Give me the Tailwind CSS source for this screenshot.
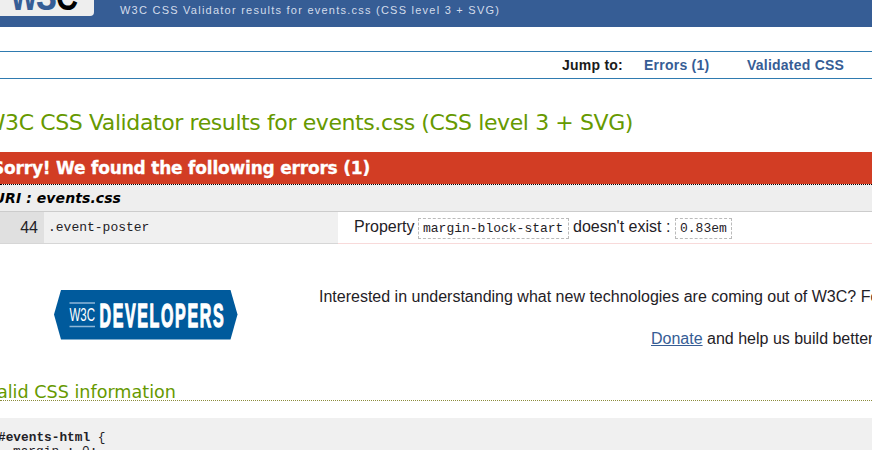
<!DOCTYPE html>
<html lang="en">
<head>
<meta charset="utf-8">
<title>W3C CSS Validator results</title>
<script src="https://cdn.jsdelivr.net/npm/@tailwindcss/browser@4"></script>
</head>
<body class="w-[872px] h-[450px] overflow-hidden bg-white text-[#1f2126] font-['Liberation_Sans',Arial,sans-serif]">
<header class="h-[27px] bg-[#365d95] flex">
  <svg class="w-[94px] h-4 shrink-0 rounded-br-[4px] bg-[#eeeeee]" viewBox="0 0 94 16" font-family="Liberation Sans, sans-serif" font-weight="bold">
    <text x="10.500" y="9.500" font-size="38" fill="#365d95" textLength="27" lengthAdjust="spacingAndGlyphs">W</text>
    <text x="36" y="9.500" font-size="38" fill="#365d95" textLength="21" lengthAdjust="spacingAndGlyphs">3</text>
    <text x="56" y="9.500" font-size="38" fill="#000" textLength="22" lengthAdjust="spacingAndGlyphs">C</text>
  </svg>
  <p class="ml-[26px] mt-[3px] text-[11px] leading-[15px] tracking-[1.24px] text-[#d3dceb] whitespace-nowrap">W3C CSS Validator results for events.css (CSS level 3 + SVG)</p>
</header>
<nav class="mt-6 h-7 border-y border-[#2f7bb0] flex items-center font-bold text-[14px] leading-[26px] tracking-[0.23px] whitespace-nowrap">
  <span class="ml-[562px] w-[82px] text-[#1b1b1b]">Jump to:</span>
  <a class="w-[103px] text-[#365d95]">Errors (1)</a>
  <a class="text-[#365d95]">Validated CSS</a>
</nav>
<h2 class="mt-[27px] w-[633px] flex justify-end whitespace-nowrap font-['DejaVu_Sans',sans-serif] text-[22px] leading-[34px] tracking-[-0.4px] text-[#690]">W3C CSS Validator results for events.css (CSS level 3 + SVG)</h2>
<h3 class="mt-[12px] h-8 bg-[#d23d24]"><span class="w-[370px] h-8 flex justify-end whitespace-nowrap font-['DejaVu_Sans',sans-serif] font-bold text-[17px] leading-[32px] tracking-[-0.2px] text-white [-webkit-text-stroke:0.3px_white]">Sorry! We found the following errors (1)</span></h3>
<h4 class="h-7 border-t border-dotted border-black border-b border-b-[#ccc] bg-[#eee] [border-bottom-style:solid]"><span class="w-[121px] flex justify-end whitespace-nowrap font-['DejaVu_Sans',sans-serif] font-bold italic text-[14px] leading-[26px] tracking-[0.08px] text-black">URI : events.css</span></h4>
<div class="h-8 flex whitespace-nowrap">
  <div class="w-11 bg-[#e0e0e0] border-b border-[#d6d6d6] pr-[6px] text-right text-[16px] leading-[31px]">44</div>
  <div class="w-[294px] bg-[#f0f0f0] border-b border-[#d6d6d6] pl-1 font-['Liberation_Mono',monospace] text-[13px] leading-[32px]">.event-poster</div>
  <div class="flex-1 border-b border-[#f8dada] pl-4 flex text-[16px] leading-[30px]">
    <span class="w-[64px]">Property</span>
    <code class="mt-[6px] w-[151px] h-[21px] border border-dashed border-[#bbb] pl-1 font-['Liberation_Mono',monospace] text-[13px] leading-[20px]">margin-block-start</code>
    <span class="w-[102px] ml-1">doesn't exist :</span>
    <code class="mt-[6px] w-[57px] h-[21px] border border-dashed border-[#bbb] pl-1 font-['Liberation_Mono',monospace] text-[13px] leading-[20px]">0.83em</code>
  </div>
</div>
<section class="h-[136px] flex pt-[42px] whitespace-nowrap text-[16px]">
  <svg class="w-[184px] h-[58px] ml-[54px] shrink-0" viewBox="0 0 184 58" fill="none">
    <path d="M7 4H176.5L183.5 28.5L176.5 53.500H7L0 28.500Z" fill="#005a9c"/>
    <path d="M15.500 17H41M15.500 40.500H41" stroke="#8eb7d7" stroke-width="1.3"/>
    <g fill="#fff" font-family="Liberation Sans, sans-serif">
      <text x="15.500" y="35" font-size="18" textLength="25.500" lengthAdjust="spacingAndGlyphs">W3C</text>
      <g font-size="34" font-weight="bold" transform="translate(45.500 40.500) scale(.47 1)">
        <text textLength="264" lengthAdjust="spacing" stroke="#fff" stroke-width="1.4">DEVELOPERS</text>
      </g>
    </g>
  </svg>
  <div class="ml-[81px] flex-1 overflow-hidden leading-[22px]">
    <p>Interested in understanding what new technologies are coming out of W3C? Follow</p>
    <p class="mt-5 pl-[332px]"><a class="text-[#365d95] underline">Donate</a> and help us build better tools</p>
  </div>
</section>
<h3 class="h-[21px] border-b border-dotted border-[#8c8c3c]"><span class="w-[176px] flex justify-end whitespace-nowrap font-['DejaVu_Sans',sans-serif] text-[17.6px] leading-[25px] text-[#690]">Valid CSS information</span></h3>
<pre class="mt-[17px] h-[33px] overflow-hidden bg-[#f0f0f0] pt-[13px] font-['Liberation_Mono',monospace] text-[12.8px] leading-[14px]"><span class="-ml-0.5"><b>#events-html</b> {</span>
<span class="ml-[13px]">margin : 0;</span></pre>
</body>
</html>
